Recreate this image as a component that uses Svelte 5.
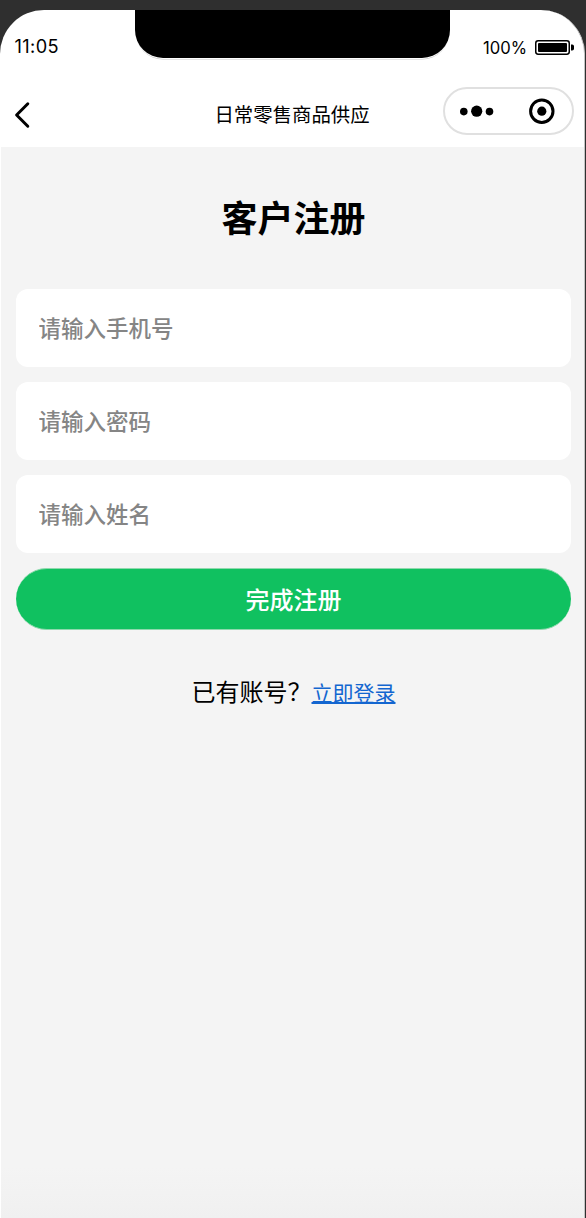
<script>
  const fields = $state([
    { name: 'phone', type: 'tel', hint: '请输入手机号', value: '' },
    { name: 'password', type: 'password', hint: '请输入密码', value: '' },
    { name: 'realname', type: 'text', hint: '请输入姓名', value: '' },
  ])
</script>

<div class="phone">
  <header>
    <div class="notch"></div>

    <div class="status">
      <span class="time">11:05</span>
      <span class="power">
        100%
        <svg width="39" height="16" viewBox="0 0 39 16">
          <rect x="0.75" y="0.75" width="33.5" height="13.5" rx="2.4" fill="none" stroke="#000" stroke-width="1.5" />
          <rect x="3" y="3" width="29" height="9" rx="1" />
          <path d="M36 4.5h1.2a1.8 1.8 0 0 1 1.8 1.8v2.4a1.8 1.8 0 0 1-1.8 1.8H36z" />
        </svg>
      </span>
    </div>

    <nav>
      <button class="back" aria-label="返回">
        <svg width="18" height="28" viewBox="0 0 18 28">
          <path d="M14.8 2.8 3.6 14l11.2 11.2" fill="none" stroke="#000" stroke-width="3" stroke-linecap="round" stroke-linejoin="round" />
        </svg>
      </button>
      <span class="page-name">日常零售商品供应</span>
      <div class="capsule">
        <svg width="34" height="12" viewBox="0 0 34 12">
          <circle cx="3.8" cy="6.6" r="3.8" />
          <circle cx="16.7" cy="6.2" r="5.6" />
          <circle cx="29.5" cy="6.6" r="3.8" />
        </svg>
        <svg width="26" height="26" viewBox="0 0 26 26">
          <circle cx="12.8" cy="13.2" r="11.2" fill="none" stroke="#000" stroke-width="3" />
          <circle cx="12.8" cy="13.2" r="4.6" />
        </svg>
      </div>
    </nav>
  </header>

  <main>
    <h1>客户注册</h1>

    <form onsubmit={(e) => e.preventDefault()}>
      {#each fields as field}
        <input type={field.type} name={field.name} placeholder={field.hint} autocomplete="off" bind:value={field.value} />
      {/each}
      <button class="submit">完成注册</button>
    </form>

    <p class="login">已有账号？<a href="#login">立即登录</a></p>
  </main>
</div>

<style>
  :global(body) {
    background: #2f2f2f;
  }

  :global(#app) { display: flow-root; }

  .phone {
    box-sizing: border-box;
    width: 585px;
    height: 1208px;
    margin-top: 10px;
    border-right: 1px solid #c4c4c4;
    border-radius: 44px 44px 0 0;
    background: #fff;
    overflow: hidden;
    font-family: Inter, 'Noto Sans CJK SC', sans-serif;
    color: #000;
    display: flex;
    flex-direction: column;
  }

  header {
    position: relative;
    height: 137px;
    display: flex;
    flex-direction: column;
  }

  .notch {
    position: absolute;
    top: 0;
    left: 134.5px;
    width: 315px;
    height: 48px;
    border-radius: 0 0 28px 28px;
    background: #000;
    box-shadow: 0 1px 0 #fff, 0 2px 0 -0.5px #ccc;
  }

  .status {
    display: flex;
    justify-content: space-between;
    height: 76px;
    padding: 0 10px 0 14.5px;
    line-height: 24px;
  }

  .time {
    margin-top: 24px;
    font-size: 18.2px;
    letter-spacing: 0.4px;
  }

  .power {
    display: flex;
    gap: 8px;
    margin-top: 26px;
    height: 24px;
    font-size: 16.6px;
  }

  .power svg { margin-top: 4px; }

  nav {
    display: grid;
    grid-template-columns: 131px 1fr 131px;
    align-items: center;
    height: 49px;
    padding: 0 10px 0 12.5px;
  }

  button {
    border: 0;
    padding: 0;
    font-family: inherit;
  }

  .back {
    width: 20px;
    height: 28px;
    margin-top: 8px;
    background: none;
    text-align: left;
  }

  .back svg { display: block; }

  .page-name {
    margin: 8px 2.5px 0 0;
    font-size: 19.4px;
    line-height: 28px;
    text-align: center;
  }

  .capsule {
    box-sizing: border-box;
    display: flex;
    align-items: center;
    justify-content: space-between;
    height: 48px;
    padding: 0 17px 0 15px;
    border: 2px solid #e0e0e0;
    border-radius: 24px;
  }

  main {
    flex: 1;
    margin-left: 1px;
    padding: 46px 13px 0 15px;
    background: linear-gradient(#f4f4f4 0, #f4f4f4 1020px, #f0f0f0 1071px);
  }

  h1 {
    margin: 0 0 44px;
    font-size: 36px;
    line-height: 52px;
    font-weight: 700;
    text-align: center;
  }

  form {
    display: flex;
    flex-direction: column;
    gap: 15px;
  }

  input {
    box-sizing: border-box;
    width: 100%;
    height: 78px;
    padding: 0 22.5px;
    border: 0;
    border-radius: 12px;
    outline: 0;
    background: #fff;
    font: 500 22.5px Inter, 'Noto Sans CJK SC', sans-serif;
  }

  input::placeholder { color: #858585; }

  .submit {
    height: 62px;
    padding-bottom: 2px;
    border-top: 1px solid #8fd9ad;
    border-bottom: 1px solid #8fd9ad;
    border-radius: 31px;
    background: #10c160;
    color: #fff;
    font-size: 24px;
    font-weight: 500;
  }

  .login {
    margin: 45px 0 0;
    font-size: 24px;
    line-height: 36px;
    text-align: center;
  }

  .login a {
    color: #1366d0;
    font-size: 21px;
    text-decoration-thickness: 1.5px;
    text-underline-offset: 1px;
  }
</style>
